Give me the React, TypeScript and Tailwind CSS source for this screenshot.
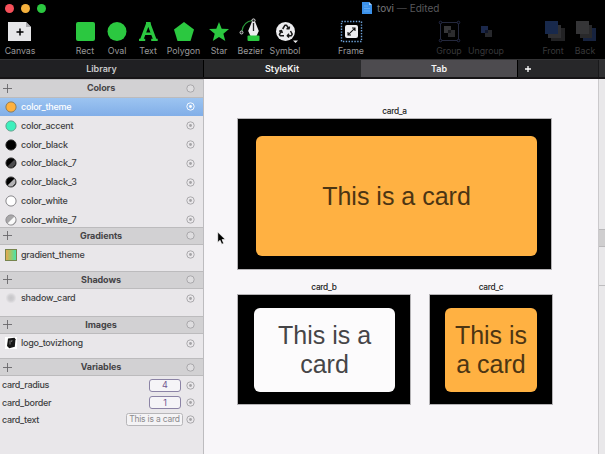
import React from 'react';
import { clsx } from 'clsx';

function Tool({ label, className, dim, children }: { label: string; className: string; dim?: boolean; children: React.ReactNode }) {
  return (
    <div className={clsx('flex shrink-0 flex-col items-center', className)}>
      <svg width="26" height="26" viewBox="0 0 26 26" className="block">
        {children}
      </svg>
      <span className={clsx('mt-[1px] whitespace-nowrap text-[8.8px] leading-[12px] tracking-[-0.05px]', dim ? 'text-[#39393b]' : 'text-[#98989a]')}>{label}</span>
    </div>
  );
}

function Toolbar() {
  return (
    <div className="flex h-[43px] pt-[2px]">
      <Tool label="Canvas" className="w-10">
        <path d="M1 4h18l5 5v14H1z" fill="#e6e6e8" />
        <path d="M19 4v5h5z" fill="#a9a9ad" />
        <path d="M13 10.500v7M9.500 14h7" stroke="#000" strokeWidth="1.500" />
      </Tool>
      <Tool label="Rect" className="ml-[30px] w-[30px]">
        <rect x="4" y="4" width="19" height="19" rx="2" fill="#2bc840" />
      </Tool>
      <Tool label="Oval" className="w-[34px]">
        <circle cx="13" cy="13.500" r="9.500" fill="#2bc840" />
      </Tool>
      <Tool label="Text" className="w-7">
        <path d="M12.800 5.500L6.800 21.500M13.800 5.500L19.800 21.500" fill="none" stroke="#2bc840" strokeWidth="3.400" />
        <path d="M11 4h4.600v3H11zM9 14.500h8.500v2.600H9zM4 20.800h6.200V23H4zM16.200 20.800h6.500V23h-6.500z" fill="#2bc840" />
      </Tool>
      <Tool label="Polygon" className="w-[43px]">
        <path d="M13 4l10 7.500L19.500 23h-13L3 11.500z" fill="#2bc840" />
      </Tool>
      <Tool label="Star" className="w-7">
        <path d="M13 4l2.700 6.700 7.300.4-5.600 4.700 1.900 7.200L13 19l-6.200 4 1.900-7.200L3 11.100l7.300-.4z" fill="#2bc840" />
      </Tool>
      <Tool label="Bezier" className="w-[35px]">
        <path d="M4 13C5 7 9 3 14.500 2.500" fill="none" stroke="#2a9a3a" strokeWidth="1.200" />
        <circle cx="3.500" cy="14.500" r="1.500" fill="#222" stroke="#ddd" strokeWidth=".9" />
        <path d="M13.800 4h3.400l3.600 9-2.300 5h-6l-2.300-5z" fill="#ececee" />
        <rect x="9.500" y="17.500" width="12" height="5.500" rx="1" fill="#2bc840" />
        <path d="M15.500 5v8" stroke="#222" strokeWidth="1.300" />
        <circle cx="15.500" cy="2.500" r="1.600" fill="#222" stroke="#ddd" />
      </Tool>
      <Tool label="Symbol" className="w-[34px]">
        <circle cx="13.500" cy="13.500" r="9.500" fill="#ededef" />
        <g fill="none" stroke="#171717" strokeWidth="1.500" strokeLinejoin="round">
          <path d="M10.700 11l2.300-3.800h1.500l2.200 3.600M14.500 10.800h2.500l.5-2.300" />
          <path d="M18.500 13l1.700 3.200-.8 1.500h-4M17 15.800l-1.700 1.900 1.700 1.800" />
          <path d="M12 17.700H8.200l-.8-1.400 2-3.400M7.200 13.200l2.300-.6.900 2.300" />
        </g>
        <path d="M21 22.500h5L23.500 25z" fill="#eee" />
      </Tool>
      <Tool label="Frame" className="ml-[34px] w-[30px]">
        <rect x="3.500" y="3.500" width="20" height="20" fill="none" stroke="#6fa4dc" strokeWidth="1.400" strokeDasharray="1.400 1.460" />
        <rect x="7" y="7" width="13" height="13" rx="2" fill="#ededef" />
        <path d="M10.300 16.700l6.400-6.400M14 10h3v3M10 14v3h3" fill="none" stroke="#111" strokeWidth="1.100" />
      </Tool>
      <Tool label="Group" className="ml-[68px] w-[30px]" dim>
        <rect x="4.500" y="4.500" width="18" height="18" fill="none" stroke="#25293d" />
        <path d="M8 8h7v7H8z" fill="#363638" />
        <path d="M12 12h7v7h-7z" fill="#2c2c2e" />
        <path d="M12 12h3v3h-3z" fill="#171719" />
        <g fill="#000" stroke="#252b48"><circle cx="4.500" cy="4.500" r="1.300" /><circle cx="22.500" cy="4.500" r="1.300" /><circle cx="4.500" cy="22.500" r="1.300" /><circle cx="22.500" cy="22.500" r="1.300" /></g>
      </Tool>
      <Tool label="Ungroup" className="w-11" dim>
        <path d="M8 8h7v7H8z" fill="#1b284b" />
        <path d="M12 12h7v7h-7z" fill="#27282c" />
        <path d="M12 12h3v3h-3z" fill="#10162a" />
      </Tool>
      <Tool label="Front" className="ml-[30px] w-[30px]" dim>
        <path d="M11 10h14v13H11z" fill="#222224" />
        <path d="M8 7h13v13H8z" fill="#303033" />
        <path d="M5 3h13v13H5z" fill="#18294c" />
      </Tool>
      <Tool label="Back" className="w-[34px]" dim>
        <path d="M11 10h13v13H11z" fill="#17233f" />
        <path d="M8 7h12v13H8z" fill="#29292b" />
        <path d="M4 3h13v13H4z" fill="#353537" />
      </Tool>
    </div>
  );
}

function Target({ selected, empty }: { selected?: boolean; empty?: boolean }) {
  const c = selected ? '#fff' : '#a4a3a6';
  return (
    <svg width="9" height="9" viewBox="0 0 9 9" className="block shrink-0">
      <circle cx="4.500" cy="4.500" r="3.700" fill={empty ? '#dedddf' : 'none'} stroke={c} strokeWidth=".9" />
      {!empty && <circle cx="4.500" cy="4.500" r="1.400" fill={c} />}
    </svg>
  );
}

function Header({ title, className }: { title: string; className: string }) {
  return (
    <div className={clsx('flex shrink-0 items-center border-y border-[#bcbbbd] bg-[#d2d1d3] pl-[3px] pr-2', className)}>
      <svg width="9" height="9" viewBox="0 0 9 9" className="block">
        <path d="M4.500 0v9M0 4.500h9" stroke="#68676a" strokeWidth=".9" />
      </svg>
      <span className="flex-1 pl-[4px] text-center text-[9px] font-bold leading-3 tracking-[-0.1px] text-[#454447]">{title}</span>
      <Target empty />
    </div>
  );
}

function Row({ name, children, selected, className }: { name: string; children: React.ReactNode; selected?: boolean; className?: string }) {
  return (
    <div className={clsx('flex shrink-0 items-center pl-[5px] pr-2', className ?? 'h-[18.800px]', selected ? 'bg-linear-to-b from-[#9cc4f1] to-[#81aee8] text-white' : 'text-[#403f42]')}>
      <svg width="12" height="12" viewBox="0 0 12 12" className="block shrink-0">{children}</svg>
      <span className="ml-[4px] flex-1 whitespace-nowrap text-[9px] font-medium leading-3 tracking-[-0.25px]">{name}</span>
      <Target selected={selected} />
    </div>
  );
}

function Swatch({ a, b, stroke }: { a: string; b?: string; stroke: string }) {
  return (
    <>
      <circle cx="6" cy="6" r="5.100" fill={a} stroke={stroke} strokeWidth=".9" />
      {b && <path d="M9.300 2.700A4.700 4.700 0 0 1 2.700 9.300z" fill={b} />}
    </>
  );
}

function Variable({ name, value, wide }: { name: string; value: string; wide?: boolean }) {
  return (
    <div className="flex h-[17.300px] shrink-0 items-center pl-[2px] pr-2 text-[9px] text-[#403f42]">
      <span className="flex-1 font-medium tracking-[-0.3px]">{name}</span>
      {wide ? (
        <span className="mr-[3px] flex h-[13px] w-[57px] items-center justify-center whitespace-nowrap rounded-[2.500px] border border-[#b7b6b9] bg-[#f4f3f5] text-[8.500px] tracking-[-0.2px] text-[#8b8a8d]">{value}</span>
      ) : (
        <span className="mr-[5px] flex h-[13px] w-8 items-center justify-center rounded-[3px] border border-[#8b83a5] bg-[#f5f4f7] text-[#71548f]">{value}</span>
      )}
      <Target />
    </div>
  );
}

function Sidebar() {
  return (
    <div className="flex w-[204px] shrink-0 flex-col border-r border-[#bdbcbf] bg-[#e9e7ea]">
      <Header title="Colors" className="h-[18.600px]" />
      <Row name="color_theme" selected><Swatch a="#ffb13f" stroke="#8a7650" /></Row>
      <Row name="color_accent"><Swatch a="#3df0bd" stroke="#5a9c88" /></Row>
      <Row name="color_black"><Swatch a="#000" stroke="#222" /></Row>
      <Row name="color_black_7"><Swatch a="#000" b="#4c4b4d" stroke="#333" /></Row>
      <Row name="color_black_3"><Swatch a="#000" b="#b2b1b3" stroke="#444" /></Row>
      <Row name="color_white"><Swatch a="#fff" stroke="#7d7c7f" /></Row>
      <Row name="color_white_7" className="h-[16.600px] pt-[2px]"><Swatch a="#a8a7a9" b="#fafafa" stroke="#89888b" /></Row>
      <Header title="Gradients" className="h-[18px]" />
      <Row name="gradient_theme" className="h-[19.500px]">
        <defs>
          <linearGradient id="theme"><stop stopColor="#eda44f" /><stop offset=".5" stopColor="#9cc86b" /><stop offset="1" stopColor="#3fe7b1" /></linearGradient>
        </defs>
        <rect x=".5" y=".5" width="11" height="11" fill="url(#theme)" stroke="#77844e" />
      </Row>
      <Header title="Shadows" className="mt-[6.500px] h-[18px]" />
      <Row name="shadow_card" className="h-[19px]">
        <defs>
          <radialGradient id="soft"><stop stopColor="#c6c5c8" /><stop offset=".5" stopColor="#cfced1" /><stop offset="1" stopColor="#e9e7ea" /></radialGradient>
        </defs>
        <circle cx="6" cy="6" r="5.500" fill="url(#soft)" />
      </Row>
      <Header title="Images" className="mt-2 h-[18px]" />
      <Row name="logo_tovizhong" className="h-[19px]">
        <rect width="12" height="12" fill="#fff" />
        <path d="M3 1.500l6.500-.7 1 1.500-.7 7.500-5.500 1.500L2 9z" fill="#161616" />
        <path d="M5 3.500v4M7 3l-.5 2" stroke="#bbb" strokeWidth=".6" />
      </Row>
      <Header title="Variables" className="mt-[5.500px] h-[18px]" />
      <Variable name="card_radius" value="4" />
      <Variable name="card_border" value="1" />
      <Variable name="card_text" value="This is a card" wide />
    </div>
  );
}

function Artboard({ name, lines, board, card }: { name: string; lines: string[]; board: string; card: string }) {
  return (
    <div className="flex flex-col items-center">
      <span className="h-3 text-[8.300px] font-medium leading-[11px] tracking-[-0.3px] text-[#222]">{name}</span>
      <div className={clsx('border border-[#b5b3b6] bg-black', board)}>
        <div className={clsx("flex flex-col items-center justify-center rounded-[6px] font-['Liberation_Sans',sans-serif] text-[25px] leading-[29px]", card)}>
          {lines.map((line) => <span key={line} className="whitespace-nowrap">{line}</span>)}
        </div>
      </div>
    </div>
  );
}

export default function App() {
  return (
    <div className="relative flex h-[454px] w-[605px] flex-col overflow-hidden bg-black font-[Inter,sans-serif]">
      <div className="flex h-4 shrink-0 items-center pl-[5px]">
        <div className="flex gap-[7px]">
          <span className="h-[9px] w-[9px] rounded-full bg-[#f6505a]" />
          <span className="h-[9px] w-[9px] rounded-full bg-[#f5b13d]" />
          <span className="h-[9px] w-[9px] rounded-full bg-[#2bc840]" />
        </div>
        <svg width="10" height="12" viewBox="0 0 10 12" className="ml-[316px] block">
          <path d="M0 0h7l3 3v9H0z" fill="#3b91ea" />
          <path d="M7 0v3h3z" fill="#a4d0fa" />
          <path d="M2 4h4M2 6.500h6M2 9h6" stroke="#69aff4" strokeWidth=".8" />
        </svg>
        <span className="ml-[5px] whitespace-pre text-[10px] leading-3 text-[#77767a]">tovi <span className="text-[#48484b]">— </span><span className="text-[#59595c]">Edited</span></span>
      </div>
      <Toolbar />
      <div className="flex h-5 shrink-0 border-b-2 border-t border-b-[#161416] border-t-[#343436] text-[9px] font-semibold leading-[18px] text-[#f4f4f5]">
        <div className="w-[204px] border-r border-black bg-[#202023] text-center text-[#c8c8ca]">Library</div>
        <div className="w-[157px] border-r border-[#29292b] bg-[#29292b] text-center">StyleKit</div>
        <div className="w-[156px] bg-[#4d4b4f] text-center">Tab</div>
        <div className="flex w-[81px] items-center border-l border-black bg-[#272729] pl-[6px]">
          <svg width="8" height="8" viewBox="0 0 8 8"><path d="M4 1v6M1 4h6" stroke="#fff" strokeWidth="1.300" /></svg>
        </div>
        <div className="flex-1 border-l border-[#18181a] bg-[#303032]" />
      </div>
      <div className="flex min-h-0 flex-1">
        <Sidebar />
        <main className="flex flex-1 flex-col bg-[#f8f6f9] pl-[33px] pt-[27px]">
          <div className="flex">
            <Artboard name="card_a" lines={['This is a card']} board="h-[152px] w-[315px] pl-[18px] pt-[17px]" card="h-[120px] w-[281px] bg-[#ffb142] text-[#4c3513]" />
          </div>
          <div className="mt-3 flex gap-[18px]">
            <Artboard name="card_b" lines={['This is a', 'card']} board="h-[111px] w-[174px] pl-4 pt-[13px]" card="h-[84px] w-[141px] bg-[#fcfbfc] text-[#464547]" />
            <Artboard name="card_c" lines={['This is', 'a card']} board="h-[111px] w-[124px] pl-[15px] pt-[13px]" card="h-[84px] w-[92px] bg-[#ffb142] text-[#4c3513]" />
          </div>
        </main>
        <aside className="flex w-[7px] shrink-0 flex-col border-l border-[#cbc9cc] bg-[#e9e8ea]">
          <div className="h-[150px]" />
          <div className="h-[18px] border-y border-[#b9b8ba] bg-[#cfcecf]" />
          <div className="h-[39px] border-b border-[#bdbcbe]" />
        </aside>
      </div>
      <svg width="9" height="14" viewBox="0 0 9 14" className="absolute left-[217px] top-[231px]">
        <path d="M.7 1v10.500l2.400-2.200 1.600 3.900 2-.8-1.600-3.800h3.300z" fill="#000" stroke="#fff" strokeWidth=".7" />
      </svg>
    </div>
  );
}
